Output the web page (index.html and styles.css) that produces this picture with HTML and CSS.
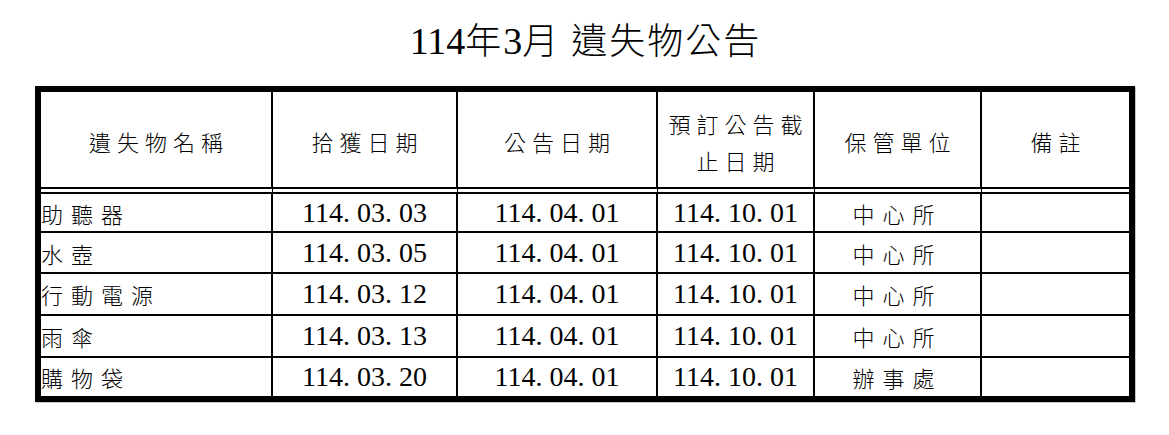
FILE: index.html
```html
<!DOCTYPE html>
<html lang="zh-Hant">
<head>
<meta charset="utf-8">
<title>114年3月遺失物公告</title>
<link rel="stylesheet" href="styles.css">
</head>
<body>
<h1 class="title"><span class="num">114</span>年<span class="num">3</span>月 遺失物公告</h1>
<table class="notice">
  <thead>
    <tr>
      <th class="c1">遺失物名稱</th>
      <th class="c2">拾獲日期</th>
      <th class="c3">公告日期</th>
      <th class="c4">預訂公告截止日期</th>
      <th class="c5">保管單位</th>
      <th class="c6">備註</th>
    </tr>
  </thead>
  <tbody>
    <tr class="r1">
      <td class="name">助聽器</td>
      <td class="date">114<span class="dot">.</span>03<span class="dot">.</span>03</td>
      <td class="date">114<span class="dot">.</span>04<span class="dot">.</span>01</td>
      <td class="date">114<span class="dot">.</span>10<span class="dot">.</span>01</td>
      <td class="unit">中心所</td>
      <td class="note"></td>
    </tr>
    <tr class="r2">
      <td class="name">水壺</td>
      <td class="date">114<span class="dot">.</span>03<span class="dot">.</span>05</td>
      <td class="date">114<span class="dot">.</span>04<span class="dot">.</span>01</td>
      <td class="date">114<span class="dot">.</span>10<span class="dot">.</span>01</td>
      <td class="unit">中心所</td>
      <td class="note"></td>
    </tr>
    <tr class="r3">
      <td class="name">行動電源</td>
      <td class="date">114<span class="dot">.</span>03<span class="dot">.</span>12</td>
      <td class="date">114<span class="dot">.</span>04<span class="dot">.</span>01</td>
      <td class="date">114<span class="dot">.</span>10<span class="dot">.</span>01</td>
      <td class="unit">中心所</td>
      <td class="note"></td>
    </tr>
    <tr class="r4">
      <td class="name">雨傘</td>
      <td class="date">114<span class="dot">.</span>03<span class="dot">.</span>13</td>
      <td class="date">114<span class="dot">.</span>04<span class="dot">.</span>01</td>
      <td class="date">114<span class="dot">.</span>10<span class="dot">.</span>01</td>
      <td class="unit">中心所</td>
      <td class="note"></td>
    </tr>
    <tr class="r5">
      <td class="name">購物袋</td>
      <td class="date">114<span class="dot">.</span>03<span class="dot">.</span>20</td>
      <td class="date">114<span class="dot">.</span>04<span class="dot">.</span>01</td>
      <td class="date">114<span class="dot">.</span>10<span class="dot">.</span>01</td>
      <td class="unit">辦事處</td>
      <td class="note"></td>
    </tr>
  </tbody>
</table>
</body>
</html>
```
FILE: styles.css
```css
html, body {
  margin: 0;
  padding: 0;
  background: #ffffff;
}

body {
  width: 1169px;
  height: 435px;
  overflow: hidden;
  color: #000000;
  font-family: "Liberation Serif", "Noto Sans CJK TC", serif;
  font-weight: 300;
}

.title {
  margin: 19px 0 0 0;
  height: 44px;
  line-height: 44px;
  font-size: 36px;
  font-weight: 300;
  text-align: center;
  letter-spacing: 2px;
  padding-left: 2px;
}

.title .num {
  font-size: 38px;
  letter-spacing: 0;
}

.notice {
  margin: 23px 0 0 35px;
  width: 1100px;
  table-layout: fixed;
  border-collapse: separate;
  border-spacing: 0;
  border: 6px solid #000;
  box-shadow: 1px 1px 0 #c8c8c8;
  box-sizing: border-box;
}

.notice th,
.notice td {
  box-sizing: border-box;
  padding: 0;
  border-right: 2px solid #000;
  border-bottom: 2px solid #000;
  vertical-align: middle;
  font-weight: 300;
}

.notice th:last-child,
.notice td:last-child {
  border-right: none;
}

.notice tbody tr:last-child td {
  border-bottom: none;
}

.notice th {
  height: 102px;
  border-bottom: 7px double #000;
  font-size: 22px;
  letter-spacing: 6px;
  line-height: 37px;
  text-align: center;
  padding: 8px 0 0 6px;
}

.c1 { width: 232px; }
.c2 { width: 185px; }
.c3 { width: 200px; }
.c4 { width: 157px; }
.c5 { width: 167px; }
.c6 { width: 147px; }

.r1 { height: 39px; }
.r2 { height: 41px; }
.r3 { height: 42px; }
.r4 { height: 42px; }
.r5 { height: 38px; }

.name {
  font-size: 22px;
  letter-spacing: 8px;
  text-align: left;
  padding-left: 4px;
  padding-top: 2px;
}

.date {
  font-size: 28px;
  line-height: 30px;
  text-align: center;
}

.dot {
  display: inline-block;
  width: 0.5em;
  text-align: left;
}

.unit {
  font-size: 22px;
  letter-spacing: 8px;
  text-align: center;
  padding-left: 8px;
  padding-top: 2px;
}
```
